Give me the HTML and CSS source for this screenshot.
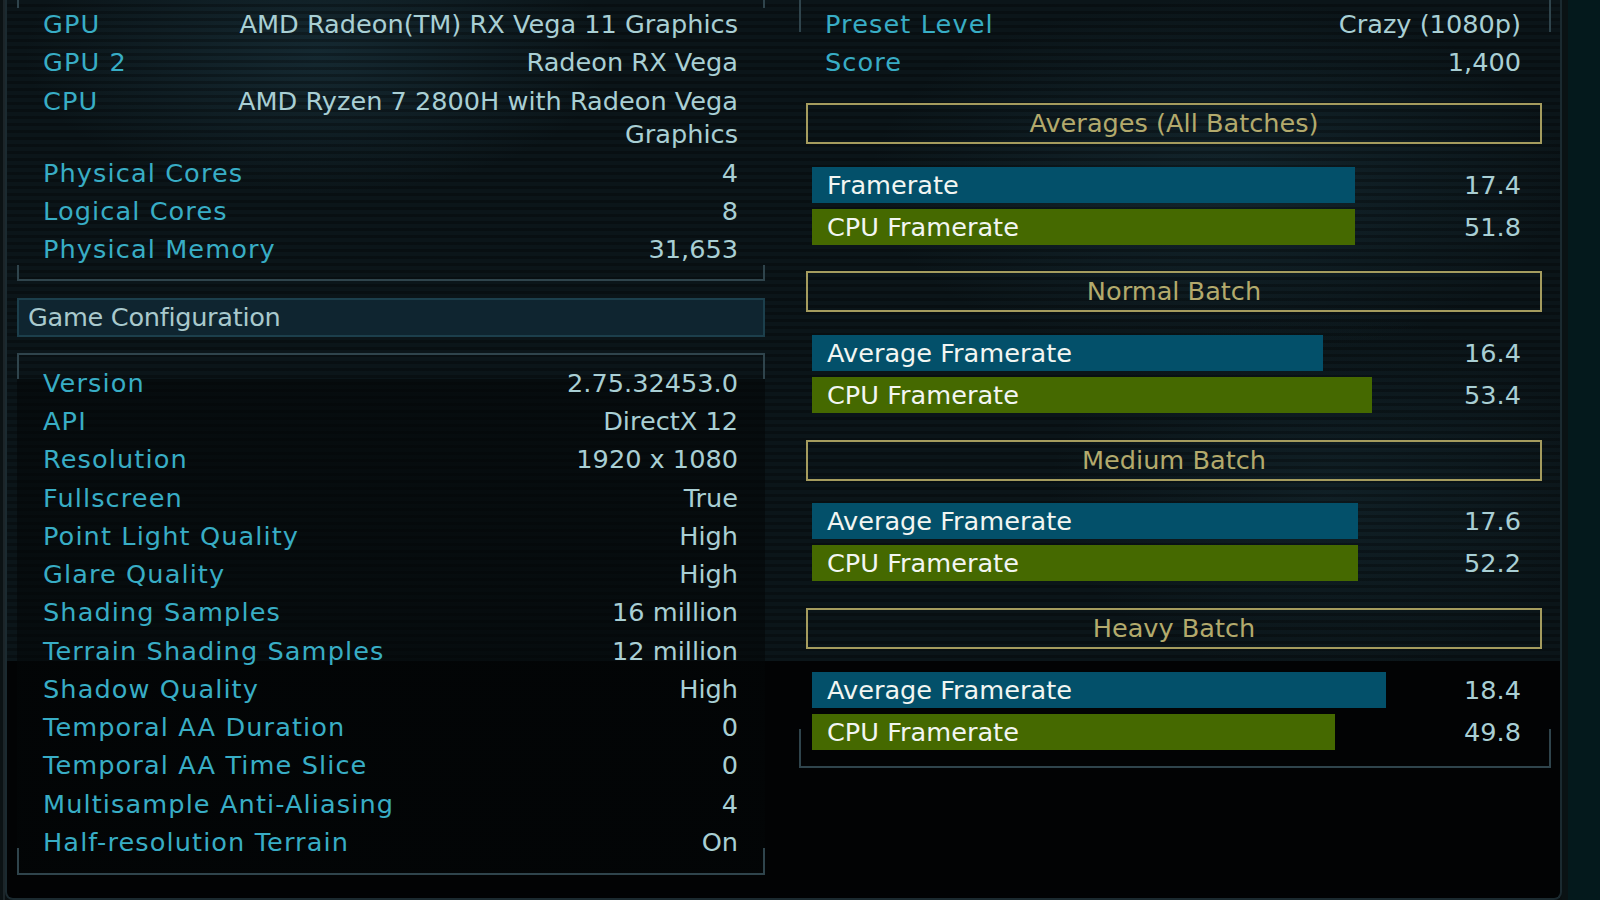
FILE: index.html
```html
<!DOCTYPE html>
<html lang="en">
<head>
<meta charset="utf-8">
<title>Benchmark Results</title>
<link rel="stylesheet" href="styles.css">
</head>
<body>
<div class="screen">
  <div class="frame">
    <div class="col col-left">
      <section class="bracket sys">
        <div class="row"><span class="k">GPU</span><span class="v">AMD Radeon(TM) RX Vega 11 Graphics</span></div>
        <div class="row"><span class="k">GPU 2</span><span class="v">Radeon RX Vega</span></div>
        <div class="row"><span class="k">CPU</span><span class="v">AMD Ryzen 7 2800H with Radeon Vega Graphics</span></div>
        <div class="row"><span class="k">Physical Cores</span><span class="v">4</span></div>
        <div class="row"><span class="k">Logical Cores</span><span class="v">8</span></div>
        <div class="row"><span class="k">Physical Memory</span><span class="v">31,653</span></div>
      </section>
      <div class="cfg-head">Game Configuration</div>
      <section class="bracket cfg">
        <div class="row"><span class="k">Version</span><span class="v">2.75.32453.0</span></div>
        <div class="row"><span class="k">API</span><span class="v">DirectX 12</span></div>
        <div class="row"><span class="k">Resolution</span><span class="v">1920 x 1080</span></div>
        <div class="row"><span class="k">Fullscreen</span><span class="v">True</span></div>
        <div class="row"><span class="k">Point Light Quality</span><span class="v">High</span></div>
        <div class="row"><span class="k">Glare Quality</span><span class="v">High</span></div>
        <div class="row"><span class="k">Shading Samples</span><span class="v">16 million</span></div>
        <div class="row"><span class="k">Terrain Shading Samples</span><span class="v">12 million</span></div>
        <div class="row"><span class="k">Shadow Quality</span><span class="v">High</span></div>
        <div class="row"><span class="k">Temporal AA Duration</span><span class="v">0</span></div>
        <div class="row"><span class="k">Temporal AA Time Slice</span><span class="v">0</span></div>
        <div class="row"><span class="k">Multisample Anti-Aliasing</span><span class="v">4</span></div>
        <div class="row"><span class="k">Half-resolution Terrain</span><span class="v">On</span></div>
      </section>
    </div>
    <div class="col col-right">
      <section class="bracket res">
        <div class="row"><span class="k">Preset Level</span><span class="v">Crazy (1080p)</span></div>
        <div class="row"><span class="k">Score</span><span class="v">1,400</span></div>

        <div class="group">
          <div class="gbox">Averages (All Batches)</div>
          <div class="bar-row"><div class="bar gpu" style="width:543px">Framerate</div><span class="v">17.4</span></div>
          <div class="bar-row"><div class="bar cpu" style="width:543px">CPU Framerate</div><span class="v">51.8</span></div>
        </div>
        <div class="group">
          <div class="gbox">Normal Batch</div>
          <div class="bar-row"><div class="bar gpu" style="width:511px">Average Framerate</div><span class="v">16.4</span></div>
          <div class="bar-row"><div class="bar cpu" style="width:560px">CPU Framerate</div><span class="v">53.4</span></div>
        </div>
        <div class="group">
          <div class="gbox">Medium Batch</div>
          <div class="bar-row"><div class="bar gpu" style="width:546px">Average Framerate</div><span class="v">17.6</span></div>
          <div class="bar-row"><div class="bar cpu" style="width:546px">CPU Framerate</div><span class="v">52.2</span></div>
        </div>
        <div class="group last">
          <div class="gbox">Heavy Batch</div>
          <div class="bar-row"><div class="bar gpu" style="width:574px">Average Framerate</div><span class="v">18.4</span></div>
          <div class="bar-row"><div class="bar cpu" style="width:523px">CPU Framerate</div><span class="v">49.8</span></div>
        </div>
      </section>
    </div>
  </div>
  <div class="side"></div>
</div>
</body>
</html>
```

FILE: styles.css
```css
html, body {
  margin: 0;
  padding: 0;
  background: #0a1012;
}

body {
  font-family: "DejaVu Sans", "Noto Sans", sans-serif;
  font-size: 25.6px;
  color: #a9cfd4;
}

.screen {
  width: 1600px;
  height: 900px;
  display: flex;
  overflow: hidden;
  background: linear-gradient(to right, #0b1214 0 3px, #1c2529 3px 5px, #0a1012 5px);
}

.frame {
  margin-left: 5px;
  width: 1557px;
  height: 900px;
  box-sizing: border-box;
  border: 2px solid #1b2a30;
  border-top: none;
  border-radius: 0 0 8px 8px;
  padding-left: 10px;
  display: flex;
  gap: 34px;
  background:
    linear-gradient(to bottom, transparent 0 661px, #020304 661px),
    repeating-linear-gradient(to bottom, rgba(0, 0, 0, 0) 0 4px, rgba(0, 0, 0, 0.28) 4px 7px),
    radial-gradient(ellipse 420px 200px at 20% 6%, rgba(46, 92, 112, 0.28), transparent 70%),
    radial-gradient(ellipse 500px 260px at 78% 20%, rgba(46, 92, 112, 0.22), transparent 70%),
    radial-gradient(ellipse 400px 260px at 85% 55%, rgba(40, 80, 96, 0.18), transparent 70%),
    #0b1519;
}

.side {
  flex: 1;
  background: linear-gradient(to right, #0a1214 0 6px, #04191c 6px);
}

.col-left {
  width: 748px;
  display: flex;
  flex-direction: column;
}

.col-right {
  width: 752px;
}

/* bracket panels: full top/bottom rule, short side ticks */
.bracket {
  position: relative;
  border-top: 2px solid #2f444c;
  border-bottom: 2px solid #2f444c;
}

.bracket::before,
.bracket::after {
  content: "";
  position: absolute;
  left: 0;
  right: 0;
  border-left: 2px solid #2f444c;
  border-right: 2px solid #2f444c;
  pointer-events: none;
}

.bracket::before {
  top: 0;
  height: 26px;
}

.bracket::after {
  bottom: 0;
  height: 14px;
}

.row {
  display: flex;
  justify-content: space-between;
  align-items: flex-start;
  line-height: 33.5px;
  padding: 2.4px 0;
  white-space: nowrap;
}

.k {
  color: #38adc5;
  letter-spacing: 1.1px;
}

.v {
  color: #a9cfd4;
  text-align: right;
  white-space: normal;
  max-width: 560px;
}

.sys {
  margin-top: -20px;
  padding: 23.8px 27px 10px 26px;
}

.cfg-head {
  margin-top: 17px;
  height: 39px;
  box-sizing: border-box;
  border: 2px solid #1c3f4c;
  background: #0f2530;
  color: #a9c9cd;
  line-height: 35px;
  padding-left: 9px;
  letter-spacing: -0.3px;
}

.cfg {
  margin-top: 16px;
  padding: 9.3px 27px 10.8px 26px;
  background: linear-gradient(to bottom, transparent 0 24px, rgba(3, 6, 7, 0.6) 24px);
}

.cfg::before {
  height: 24px;
}

.cfg::after {
  height: 25px;
}

.res {
  margin-top: -20px;
  padding: 23.8px 0 16.3px 0;
}

.res::before {
  height: 50px;
}

.res::after {
  height: 37px;
}

.res .row {
  margin: 0 30px 0 26px;
}

.group {
  margin-bottom: 26.9px;
}

.group.last {
  margin-bottom: 0;
}

.res .row + .group {
  margin-top: 20.7px;
}

.gbox {
  margin: 0 9px 22.5px 7px;
  height: 41px;
  box-sizing: border-box;
  border: 2px solid #a59c5e;
  color: #b3aa6c;
  text-align: center;
  line-height: 37px;
}

.bar-row {
  display: flex;
  justify-content: space-between;
  align-items: center;
  height: 36px;
  margin: 0 30px 0 13px;
}

.bar-row + .bar-row {
  margin-top: 6px;
}

.bar {
  height: 36px;
  box-sizing: border-box;
  padding-left: 15px;
  line-height: 36px;
  color: #f2f6f2;
  white-space: nowrap;
}

.bar.gpu {
  background: #03506a;
}

.bar.cpu {
  background: #456900;
}
```
